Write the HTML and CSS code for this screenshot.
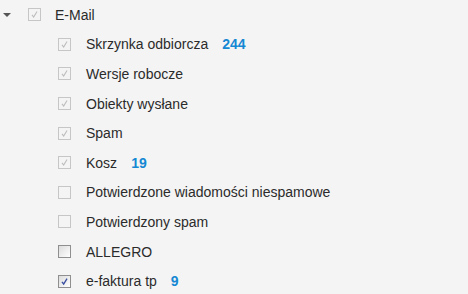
FILE: index.html
```html
<!DOCTYPE html>
<html lang="pl">
<head>
    <meta charset="UTF-8">
    <title>Foldery</title>
    <link rel="stylesheet" href="styles.css">
</head>
<body>
    <ul class="tree">
        <li class="row root">
            <span class="toggle"></span>
            <span class="box disabled checked"><svg viewBox="0 0 13 13"><path d="M3.5 7 L5.5 9.5 L9.5 3"/></svg></span>
            <span class="label">E-Mail</span>
        </li>
        <li class="row child">
            <span class="box disabled checked"><svg viewBox="0 0 13 13"><path d="M3.5 7 L5.5 9.5 L9.5 3"/></svg></span>
            <span class="label">Skrzynka odbiorcza</span>
            <span class="count">244</span>
        </li>
        <li class="row child">
            <span class="box disabled checked"><svg viewBox="0 0 13 13"><path d="M3.5 7 L5.5 9.5 L9.5 3"/></svg></span>
            <span class="label">Wersje robocze</span>
        </li>
        <li class="row child">
            <span class="box disabled checked"><svg viewBox="0 0 13 13"><path d="M3.5 7 L5.5 9.5 L9.5 3"/></svg></span>
            <span class="label">Obiekty wysłane</span>
        </li>
        <li class="row child">
            <span class="box disabled checked"><svg viewBox="0 0 13 13"><path d="M3.5 7 L5.5 9.5 L9.5 3"/></svg></span>
            <span class="label">Spam</span>
        </li>
        <li class="row child">
            <span class="box disabled checked"><svg viewBox="0 0 13 13"><path d="M3.5 7 L5.5 9.5 L9.5 3"/></svg></span>
            <span class="label">Kosz</span>
            <span class="count">19</span>
        </li>
        <li class="row child">
            <span class="box disabled"></span>
            <span class="label">Potwierdzone wiadomości niespamowe</span>
        </li>
        <li class="row child">
            <span class="box disabled"></span>
            <span class="label">Potwierdzony spam</span>
        </li>
        <li class="row child">
            <span class="box"></span>
            <span class="label">ALLEGRO</span>
        </li>
        <li class="row child">
            <span class="box checked"><svg viewBox="0 0 13 13"><path d="M3.5 7 L5.5 9.5 L9.5 3"/></svg></span>
            <span class="label">e-faktura tp</span>
            <span class="count">9</span>
        </li>
    </ul>
</body>
</html>
```

FILE: styles.css
```css
* {
    box-sizing: border-box;
    margin: 0;
    padding: 0;
}
body {
    background: #f4f4f4;
    font-family: 'Liberation Sans', Arial, sans-serif;
    font-size: 14px;
    color: #2b2b2b;
}
.tree {
    list-style: none;
}
.row {
    display: flex;
    align-items: center;
    height: 29.6px;
}
.root {
    padding-left: 3px;
}
.child {
    padding-left: 58px;
}
.toggle {
    width: 0;
    height: 0;
    border-left: 4px solid transparent;
    border-right: 4px solid transparent;
    border-top: 4px solid #555;
    margin-right: 17px;
    margin-top: 1px;
}
.box {
    width: 13px;
    height: 13px;
    border: 1px solid #8f8f8f;
    background: linear-gradient(135deg, #dcdcdc, #fff);
    display: flex;
    flex-shrink: 0;
}
.box svg {
    width: 11px;
    height: 11px;
    fill: none;
    stroke: #3a4fa0;
    stroke-width: 1.6;
}
.box.disabled {
    border-color: #c6c6c6;
    background: #f4f4f4;
}
.box.disabled svg {
    stroke: #bdbdbd;
    stroke-width: 1.3;
}
.root .label {
    margin-left: 14px;
}
.child .label {
    margin-left: 15px;
}
.count {
    margin-left: 14px;
    color: #1588d3;
    font-weight: bold;
}
```
